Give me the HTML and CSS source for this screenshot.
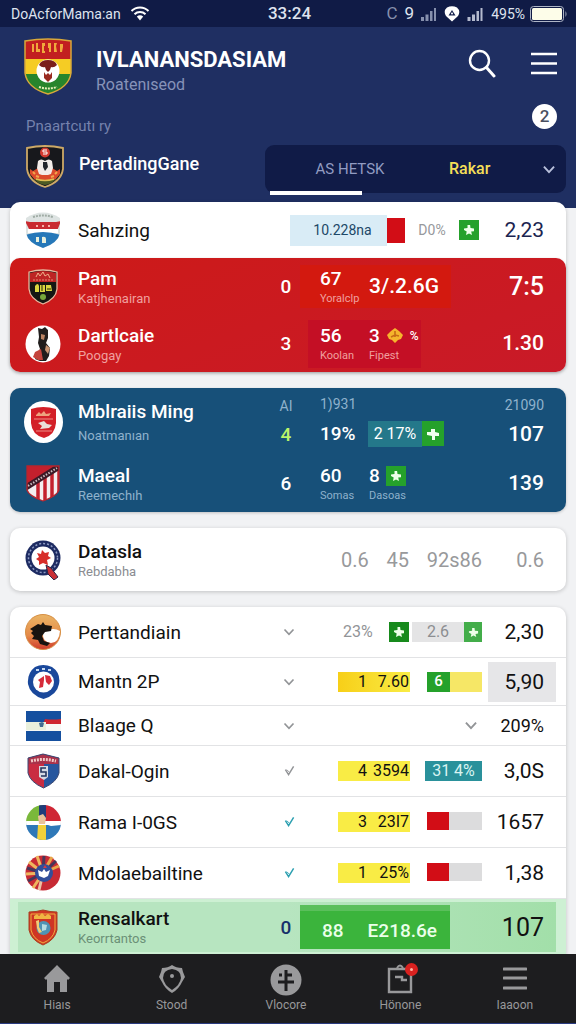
FILE: index.html
```html
<!DOCTYPE html>
<html lang="en">
<head>
<meta charset="utf-8">
<meta name="viewport" content="width=device-width, initial-scale=1">
<title>IVLANANSDASIAM</title>
<link rel="stylesheet" href="styles.css">
</head>
<body>
<svg class="defs" aria-hidden="true">
  <symbol id="chevron" viewBox="0 0 12 8"><path d="M1.5 1.5 6 6.3l4.500-4.800" fill="none" stroke="currentColor" stroke-width="1.700"/></symbol>
  <symbol id="tick" viewBox="0 0 12 12"><path d="M1.500 4.500 5 10l5.500-9" fill="none" stroke="currentColor" stroke-width="1.600"/><path d="M3 4.500 5.500 7" stroke="currentColor"/></symbol>
  <symbol id="bloom" viewBox="0 0 12 12"><path d="M4.500 1h2.600l.4 3 3.500.4v2.800L8.200 7.500 9 11 6 9.400 3 11l.7-3.500L1 6V4.600L4.500 4z" fill="#efffea"/></symbol>
  <symbol id="signal" viewBox="0 0 16 14"><path d="M0 10h3v4H0zM4.500 7.500h3V14h-3zM9 4h2.500v10H9zM13 1h2v13h-2z" fill="currentColor"/></symbol>
</svg>

<div class="status">
  <span class="carrier">DoAcforMama:an
    <svg width="20" height="15" viewBox="0 0 20 15" aria-hidden="true"><g fill="none" stroke="#fff" stroke-width="2"><path d="M1.500 5a12 12 0 0 1 17 0M4.500 8.200a8 8 0 0 1 11 0"/></g><path d="M6.800 10.500a5 5 0 0 1 6.400 0L10 14.500z" fill="#fff"/></svg>
  </span>
  <span class="clock">33:24</span>
  <span class="indicators">
    <span class="dim">C</span><span>9</span>
    <svg class="dim" width="16" height="14" aria-hidden="true"><use href="#signal"/></svg>
    <svg width="16" height="16" viewBox="0 0 16 16" aria-hidden="true"><path d="M3 1.500Q8-1 13 1.500 17 5 14 10L8 15.500 2 10Q-1 5 3 1.500z" fill="#fff"/><path d="M8 4 4.500 9.500h7z" fill="#18244f"/><circle cx="8" cy="7.500" r="1" fill="#fff"/></svg>
    <svg class="mid" width="17" height="14" aria-hidden="true"><use href="#signal"/></svg>
    <span class="percent">495%</span>
    <svg width="38" height="16" viewBox="0 0 38 16" aria-hidden="true"><rect x=".5" y=".5" width="33" height="15" rx="3" fill="none" stroke="#aeb5c6"/><rect x="2" y="2" width="30" height="12" rx="1.500" fill="#fdfde9"/><path d="M35.500 5v6q2-3 0-6z" fill="#aeb5c6"/></svg>
  </span>
</div>

<header class="header">
  <div class="brand">
    <svg class="brand-crest" width="50" height="58" viewBox="0 0 50 58" aria-hidden="true">
      <clipPath id="cb"><path d="M2 3Q25-1 48 3V35Q46 50 25 56 4 50 2 35z"/></clipPath>
      <g clip-path="url(#cb)"><path fill="#c21f20" d="M0 0h50v22H0z"/><path fill="#f5cc24" d="M0 21h50v15H0z"/><path fill="#27852c" d="M0 36h50v22H0z"/></g>
      <path d="M9 6h2v8H9zM13 5h2v6h2v3h-4zM19 5h3v3h-1v5h1v2h-3zM25 5h3v9h-2v-4h-1zM31 5h3l-1 3 1 6h-3zM37 6h3v3l-1 5h-2z" fill="#f0a93c"/>
      <circle cx="25" cy="33" r="11.500" fill="#fff"/>
      <path d="M16 27q2-5 9-5t9 5q-3 3-6 2l-1 3-2 2-2-2-1-3q-3 1-6-2z" fill="#7a1e1a"/><path d="M21 34l2 3 2-2 2 2 2-3v6l-4 4-4-4z" fill="#9a2a20"/>
      <path d="M16 49q9 3 18 0" stroke="#e8f0b8" stroke-width="2" stroke-dasharray="2 1" fill="none"/>
      <path d="M2 3Q25-1 48 3V35Q46 50 25 56 4 50 2 35z" fill="none" stroke="#d8a93a" stroke-width="1.500"/>
    </svg>
    <div class="brand-text">
      <h1 class="title">IVLANANSDASIAM</h1>
      <p class="tagline">Roatenıseod</p>
    </div>
    <button class="icon-button" aria-label="Search"><svg width="28" height="29" viewBox="0 0 28 29"><circle cx="11.500" cy="11.500" r="9.500" fill="none" stroke="#fff" stroke-width="2.400"/><path d="M18.500 18.500 26 27" stroke="#fff" stroke-width="3" stroke-linecap="round"/></svg></button>
    <button class="icon-button" aria-label="Menu"><svg width="26" height="23" viewBox="0 0 26 23"><path d="M0 2h26M0 11.500h26M0 21h26" stroke="#fff" stroke-width="2.600"/></svg></button>
  </div>
  <div class="caption-row">
    <p class="caption">Pnaartcutı ry</p>
    <span class="bubble">2</span>
  </div>
  <div class="picker">
    <svg width="40" height="43" viewBox="0 0 40 43" aria-hidden="true">
      <path d="M2 3Q20-1 38 3V24Q36 37 20 42 4 37 2 24z" fill="#17181c" stroke="#cda966" stroke-width="1.800"/>
      <path d="M8 26l5-3h14l5 3 3-2v5l-5 6H10l-5-6v-5z" fill="#db4b2c"/>
      <circle cx="20" cy="7.500" r="5" fill="#d33a30"/><path d="M22 5h-4v2h4v2h-4" stroke="#fff" fill="none"/>
      <path d="M13 16q3-3 7 0 4-3 7 0l1 7-2 6-3 1h-6l-3-1-2-6z" fill="#f3ece8"/><path d="M18 17h4l1 5-3 4-2-4z" fill="#23252b"/>
      <path d="M8 27l2 2m20 0 2-2M11 31l3 1m12 0 3-1" stroke="#f2a64c" stroke-width="2"/>
      <path d="M9 34q11 3 22 0-4 5-11 6-7-1-11-6z" fill="#4d5b24"/><path d="M11 34q9 3 18 0" stroke="#e0bf53" fill="none" stroke-width="1.500"/>
    </svg>
    <span class="picker-name">PertadingGane</span>
    <div class="tabs">
      <button class="tab">AS HETSK</button>
      <label class="tab-select"><select aria-label="Rakar"><option>Rakar</option></select><svg width="14" height="9"><use href="#chevron"/></svg></label>
    </div>
  </div>
</header>

<main class="content">
  <section class="card lead">
    <div class="row top">
      <svg class="crest" width="36" height="37" viewBox="0 0 36 37" aria-hidden="true">
        <clipPath id="cs"><path d="M1 6Q18-5 35 6V21Q33 31 18 36 3 31 1 21z"/></clipPath>
        <g clip-path="url(#cs)"><path fill="#dde3e2" d="M0 0h36v37H0z"/><path fill="#c92a30" d="M0 9l5 1h26l5-1-4 10H5z"/><path fill="#fff" d="M3 17h30v4H3z"/><path fill="#2678b9" d="M0 23q18-6 36 0v14H0z"/></g>
        <path d="M8 5q10-3 20 0" stroke="#a0aca5" stroke-width="2" stroke-dasharray="2 1" fill="none"/><path d="M11 14h2m4 0h2m4 0h2" stroke="#f7b0a8" stroke-width="2"/><path d="M11 25h3v5h-3zM17 25q4-1 4 2v4h-4z" fill="#e8f0dd"/>
      </svg>
      <span class="name">Sahızing</span>
      <div class="stats stats-top"><span class="chip pale">10.228na</span><i class="red-block"></i><span class="muted-small">D0%</span><span class="flag"><svg width="12" height="12"><use href="#bloom"/></svg></span></div>
      <span class="value navy">2,23</span>
    </div>
    <div class="panel red">
      <div class="row">
        <svg class="crest" width="30" height="36" viewBox="0 0 30 36" aria-hidden="true">
          <path d="M1 3Q15-1 29 3V20Q28 30 15 35 2 30 1 20z" fill="#151713" stroke="#e8b9a0" stroke-width="1.300"/><path d="M2 4Q15 0 28 4v9H2z" fill="#bd2424"/>
          <path d="M8 8l2-4 2 3 3-4 2 4 3-2 2 4" stroke="#efb08a" fill="none"/><path d="M5 11h20" stroke="#e58b72" stroke-dasharray="2 1"/>
          <path d="M7 17q3-4 4 0v6H7zM12 16h5v7h-5zM18 16h5l1 6h-6z" fill="#d9d63f"/><path d="M14 16v6m5-2h4" stroke="#22230d"/><circle cx="15" cy="28" r="3" fill="#78a83c"/>
        </svg>
        <div class="team"><span class="name strong">Pam</span><span class="sub">Katjhenairan</span></div>
        <span class="count">0</span>
        <div class="stats"><div class="hot"><div class="stat"><b>67</b><small>Yoralclp</small></div><b class="big">3/.2.6G</b></div></div>
        <span class="value heavy">7:5</span>
      </div>
      <div class="row">
        <svg class="crest" width="36" height="38" viewBox="0 0 36 38" aria-hidden="true">
          <ellipse cx="18" cy="19" rx="17.500" ry="18.500" fill="#fff"/><path d="M13 3l4 1 3-2 3 3v8l-2 5 4 5-1 8-3 5h-6l-5-2 2-5 3-5-2-6 1-6z" fill="#211d1c"/><path d="M16 9l4 1-1 5-3-1z" fill="#b98262"/><path d="M10 27l6-3 2 11h-5l-5-3z" fill="#c4443c"/><path d="M21 20l4 3-2 6-3-4z" fill="#c99573"/>
        </svg>
        <div class="team"><span class="name strong">Dartlcaie</span><span class="sub">Poogay</span></div>
        <span class="count">3</span>
        <div class="stats"><div class="cool"><div class="stat"><b>56</b><small>Koolan</small></div><div class="stat"><b class="with-mark">3 <svg width="18" height="16" viewBox="0 0 18 16" aria-hidden="true"><path d="M1 7 5 3l4-3 4 3 4 4-2 4-3 1-3 3-3-3-3-1z" fill="#f5b52c"/><path d="M9 3v6m-4 0 4-2 4 1" stroke="#c86b15" stroke-width="1.600" fill="none"/></svg> <i class="pct">%</i></b><small>Fipest</small></div></div></div>
        <span class="value">1.30</span>
      </div>
    </div>
  </section>

  <section class="panel blue">
    <div class="row tall">
      <svg class="crest" width="39" height="42" viewBox="0 0 39 42" aria-hidden="true">
        <ellipse cx="19.500" cy="21" rx="19.500" ry="21" fill="#fff"/><path d="M7 8Q19 4 32 8v14Q31 34 20 37 8 34 7 22z" fill="#d31f27"/><path d="M12 14l3-3 2 2 3-3 2 3 5-1-2 3H12z" fill="#eda27e"/><path d="M10 18h19M12 30h16" stroke="#ee8d86"/><path d="M14 22l6-2 3 3 5 1-3 3-9 1 2-3z" fill="#eadfd8"/>
      </svg>
      <div class="team"><span class="name strong">Mblraiis Ming</span><span class="sub">Noatmanıan</span></div>
      <div class="count stack"><small>AI</small><b class="lime">4</b></div>
      <div class="stats"><div class="stack"><small>1)931</small><div class="pair"><b class="nineteen">19%</b><span class="chip teal">2 17%</span><span class="flag joined"><svg width="14" height="14" viewBox="0 0 14 14"><path d="M5 2h4v3l4 1v3H9v4H6V9L1 8V5h4z" fill="#f0ffee"/></svg></span></div></div></div>
      <div class="value stack end"><small>21090</small><b>107</b></div>
    </div>
    <div class="row short">
      <svg class="crest" width="34" height="37" viewBox="0 0 34 37" aria-hidden="true">
        <clipPath id="cm"><path d="M1 1h32v24q-2 6-16 11Q3 31 1 25z"/></clipPath>
        <g clip-path="url(#cm)"><path fill="#f3eef0" d="M0 0h34v37H0z"/><path d="M12 12v25M19 10v27M26 5v32M33 0v37" stroke="#c4202d" stroke-width="3.500"/><path fill="#c4202d" d="M0 0h33L0 22z"/><path d="M-1 23 34 1" stroke="#3c1a27" stroke-width="6"/><path d="M2 21 31 3" stroke="#c9bfc2" stroke-width="2" stroke-dasharray="1.500 1.500"/></g><path d="M1 1h32v24q-2 6-16 11Q3 31 1 25z" fill="none" stroke="#b8252d" stroke-width="1.300"/>
      </svg>
      <div class="team"><span class="name strong">Maeal</span><span class="sub">Reemechıh</span></div>
      <span class="count">6</span>
      <div class="stats"><div class="plain"><div class="stat"><b>60</b><small>Somas</small></div><div class="stat"><b class="with-mark">8 <span class="flag"><svg width="12" height="12"><use href="#bloom"/></svg></span></b><small>Dasoas</small></div></div></div>
      <span class="value">139</span>
    </div>
  </section>

  <section class="card">
    <div class="row single">
      <svg class="crest" width="36" height="40" viewBox="0 0 36 40" aria-hidden="true">
        <circle cx="18" cy="18" r="17.500" fill="#1d2b62"/><circle cx="18" cy="18" r="14.500" fill="none" stroke="#8f9cc4" stroke-width="1.500" stroke-dasharray="2 2"/><circle cx="18" cy="18" r="11.500" fill="#fff"/>
        <path d="M12 13l4 1 1-4 3 3 4-1-1 4 3 2-4 2 1 5-5-2-4 2v-4l-3-2 3-2z" fill="#d72d29"/><path d="M21 25l5 3 7 9-4 3-6-6z" fill="#c92e35" stroke="#2b2547"/>
      </svg>
      <div class="team"><span class="name strong">Datasla</span><span class="sub">Rebdabha</span></div>
      <div class="greys"><span>0.6</span><span>45</span><span>92s86</span></div>
      <span class="value faded">0.6</span>
    </div>
  </section>

  <section class="card list">
    <div class="row item">
      <svg class="crest" width="36" height="38" viewBox="0 0 36 38" aria-hidden="true"><defs><linearGradient id="gp" x2="0" y2="1"><stop offset="0" stop-color="#eab566"/><stop offset=".6" stop-color="#e58a48"/><stop offset="1" stop-color="#cf3a2c"/></linearGradient></defs><circle cx="18" cy="19" r="17.500" fill="url(#gp)" stroke="#d78f44"/><path d="M18 20q9-7 17-2-1 12-9 12-9-1-8-10z" fill="#fff"/><path d="M5 16l8-5 3 1 2-3 2 3 7 1-1 5-6 1-3 4 2 5 6 2-3 3-7-2-2-4-6-1 2-3-3-3 2-2z" fill="#171310"/></svg>
      <span class="name">Perttandiain</span>
      <button class="toggle" aria-label="Expand"><svg width="12" height="8"><use href="#chevron"/></svg></button>
      <div class="stats line"><span class="muted">23%</span><span class="flag dark"><svg width="12" height="12"><use href="#bloom"/></svg></span><span class="chip grey">2.6</span><span class="flag light"><svg width="11" height="11"><use href="#bloom"/></svg></span></div>
      <span class="value">2,30</span>
    </div>
    <div class="row item compact">
      <svg class="crest" width="33" height="36" viewBox="0 0 33 36" aria-hidden="true"><path d="M8 3Q16-1 25 3 34 9 32 20 30 31 16.500 35 3 31 1 20 0 9 8 3z" fill="#1a489b"/><circle cx="16.500" cy="18" r="10.500" fill="#fff"/><path d="M9 6h3m3-1h3m3 1h3" stroke="#c6d8f0" stroke-width="2"/><path d="M11 16l6-4v4l-1 7-4 1 1-6zM18 11l5 1 2 5-3 4-3-3z" fill="#d62c3a"/></svg>
      <span class="name">Mantn 2P</span>
      <button class="toggle" aria-label="Expand"><svg width="12" height="8"><use href="#chevron"/></svg></button>
      <div class="stats meters"><span class="tag amber"><span>1</span><span>7.60</span></span><span class="meter sun"><span class="flag">6</span></span></div>
      <span class="value boxed">5,90</span>
    </div>
    <div class="row item slim">
      <svg class="crest" width="35" height="30" viewBox="0 0 35 30" aria-hidden="true"><path fill="#15509f" d="M0 0h35v30H0z"/><path fill="#f7f8f4" d="M0 11h35v9H0z"/><path fill="#cf2630" d="M19 8q7 1 16 0v5H17z"/><path d="M0 11h20v8H0z" fill="#e9f0dc"/><path d="M13 12l3-1 2 1-1 4h-3z" fill="#416c91"/></svg>
      <span class="name">Blaage Q</span>
      <button class="toggle" aria-label="Expand"><svg width="12" height="8"><use href="#chevron"/></svg></button>
      <div class="stats solo"><button class="toggle" aria-label="Expand details"><svg width="14" height="9"><use href="#chevron"/></svg></button></div>
      <span class="value smaller">209%</span>
    </div>
    <div class="row item">
      <svg class="crest" width="33" height="36" viewBox="0 0 33 36" aria-hidden="true"><clipPath id="cd"><path d="M1 5 16 1l16 4v15Q30 29 16.500 35 3 29 1 20z"/></clipPath><g clip-path="url(#cd)"><path fill="#c92c42" d="M0 0h17v36H0z"/><path fill="#27569e" d="M17 0h17v36H17z"/><path fill="#a9324a" d="M0 0h33v11H0z"/><path d="M4 8q12-3 25 0" stroke="#f1c9c6" stroke-width="3" stroke-dasharray="2 1" fill="none"/></g><path d="M12 13h9v11l-4 3-5-3z" fill="#d6dbe4"/><path d="M19 15h-5v4h5v4h-5" stroke="#25365e" fill="none" stroke-width="1.600"/><path d="M1 5 16 1l16 4v15Q30 29 16.500 35 3 29 1 20z" fill="none" stroke="#3b4974"/></svg>
      <span class="name">Dakal-Ogin</span>
      <button class="toggle" aria-label="Expand"><svg width="11" height="12"><use href="#tick"/></svg></button>
      <div class="stats meters"><span class="tag"><span>4</span><span>3594</span></span><span class="chip sea">31 4%</span></div>
      <span class="value">3,0S</span>
    </div>
    <div class="row item">
      <svg class="crest" width="35" height="37" viewBox="0 0 35 37" aria-hidden="true"><clipPath id="cr"><circle cx="17.500" cy="18.500" r="17.500"/></clipPath><g clip-path="url(#cr)"><path fill="#7ab83b" d="M0 0h17v19H0z"/><path fill="#cf2635" d="M17 0h18v19H17z"/><path fill="#2e78b8" d="M0 19h35v18H0z"/><path fill="#203c7a" d="M13 0h7v14h-7z"/><path fill="#fff" d="M0 17h35v4l-10 1-3-1H0z"/><path fill="#f2d13b" d="M12 21h8v16h-9z"/><path fill="#e9c39b" d="M12 12l5-2 3 4-1 6h-6z"/></g></svg>
      <span class="name">Rama I-0GS</span>
      <button class="toggle cyan" aria-label="Expand"><svg width="11" height="12"><use href="#tick"/></svg></button>
      <div class="stats meters"><span class="tag"><span>3</span><span>23I7</span></span><span class="meter"><i class="fill"></i></span></div>
      <span class="value">1657</span>
    </div>
    <div class="row item">
      <svg class="crest" width="36" height="38" viewBox="0 0 36 38" aria-hidden="true"><circle cx="18" cy="19" r="17.500" fill="#c72a34"/><g stroke-width="3"><path d="M18 19 4 8M18 19 12 2M18 19 1 20M18 19 8 34" stroke="#eeb65e"/><path d="M18 19 27 3M18 19 34 12" stroke="#e9a64a"/><path d="M18 19 19 2M18 19 2 14M18 19 3 27M18 19 31 7" stroke="#493659"/><path d="M18 19 14 36" stroke="#edc0a3"/></g><circle cx="19" cy="19" r="9" fill="#314e9a"/><path d="M13 16l4 2 2-3 2 3 4-2-2 6-4 2-5-2z" fill="#fff"/><path d="M18 14l2-3 2 3z" fill="#d33b44"/></svg>
      <span class="name">Mdolaebailtine</span>
      <button class="toggle cyan" aria-label="Expand"><svg width="11" height="12"><use href="#tick"/></svg></button>
      <div class="stats meters"><span class="tag"><span>1</span><span>25%</span></span><span class="meter"><i class="fill"></i></span></div>
      <span class="value">1,38</span>
    </div>
    <div class="winner">
      <div class="row won">
        <svg class="crest" width="30" height="37" viewBox="0 0 30 37" aria-hidden="true"><path d="M1 3q7 0 14-2 7 2 14 2v18Q27 31 15 36 3 31 1 21z" fill="#cf3524" stroke="#a9401f"/><path d="M3 5h24v16q-2 9-12 13Q5 30 3 21z" fill="none" stroke="#efae3f"/><path d="M6 7l3-2 2 2 3-3 3 3 3-2 3 2v3H6z" fill="#f0b642"/><circle cx="15.500" cy="19" r="7" fill="#4f93b5"/><path d="M8 12l3-1v7l3 5-3 1-2-5z" fill="#f0cf76"/><path d="M14 15l5 1-1 5-4 1z" fill="#b6dce2"/></svg>
        <div class="team"><span class="name strong">Rensalkart</span><span class="sub">Keorrtantos</span></div>
        <span class="count">0</span>
        <div class="stats"><div class="win-box"><b>88</b><b>E218.6e</b></div></div>
        <span class="value xl">107</span>
      </div>
    </div>
  </section>
</main>

<nav class="bottom">
  <a href="#home"><svg width="28" height="30" viewBox="0 0 28 30" aria-hidden="true"><path d="M14 1 27 14l-2 2-1-1v13h-7V18h-6v10H4V15l-1 1-2-2z" fill="#99999b"/></svg>Hiaıs</a>
  <a href="#stood"><svg width="28" height="30" viewBox="0 0 28 30" aria-hidden="true"><path d="M14 1q4 3 10 3l1 4 2 5-3 5q-3 7-10 11Q7 25 4 18l-3-5 2-5 1-4q6 0 10-3z" fill="#99999b"/><path d="M14 5q9 1 9 9-1 7-9 12-8-5-9-12 0-8 9-9z" fill="#1d1d1f"/><circle cx="14" cy="12" r="2" fill="#99999b"/></svg>Stood</a>
  <a href="#more"><svg width="32" height="32" viewBox="0 0 32 32" aria-hidden="true"><circle cx="16" cy="16" r="15.500" fill="#99999b"/><path d="M16 6v21M9 11h3m4 0h6M8 18h16" stroke="#1d1d1f" stroke-width="3"/></svg>Vlocore</a>
  <a href="#news"><span class="badge-wrap"><svg width="28" height="30" viewBox="0 0 28 30" aria-hidden="true"><path d="M3 5h22v23H3z" fill="none" stroke="#99999b" stroke-width="2.400"/><path d="M9 13h7v3h5" fill="none" stroke="#99999b" stroke-width="2.400"/><path d="M11 4q3-5 6 0" fill="none" stroke="#99999b" stroke-width="2"/></svg><span class="badge"></span></span>Hönone</a>
  <a href="#season"><svg width="24" height="30" viewBox="0 0 24 30" aria-hidden="true"><path d="M1 5h22M1 14h22M1 24h22" stroke="#99999b" stroke-width="3" stroke-linecap="round"/></svg>Iaaoon</a>
</nav>
</body>
</html>
```
FILE: styles.css
```css
* { box-sizing: border-box; }

body {
  margin: 0;
  min-height: 100vh;
  display: flex;
  flex-direction: column;
  background: #f1f2f4;
  color: #111;
  font-family: Roboto, "Liberation Sans", sans-serif;
  font-size: 19px;
  line-height: 1;
}

h1, p { margin: 0; }
button, select { font: inherit; color: inherit; background: none; border: 0; padding: 0; }
svg { display: block; flex: none; }
small { font-size: 11px; font-weight: 400; }
b { font-weight: 500; }
.defs { position: absolute; width: 0; height: 0; }

/* Status bar */
.status {
  height: 27px;
  display: grid;
  grid-template-columns: 1fr auto 1fr;
  align-items: center;
  padding: 0 8px 0 11px;
  background: #101b46;
  color: #dfe3ee;
  font-size: 17px;
}
.carrier, .indicators { display: flex; align-items: center; }
.carrier { gap: 9px; font-size: 14px; }
.clock { font-weight: 500; }
.indicators { justify-content: flex-end; gap: 7px; }
.percent { font-size: 14px; margin-right: -2px; }
.dim { color: #8690ad; }
.mid { color: #b4bace; }

/* Header */
.header {
  padding: 11px 10px 15px 23px;
  background: #1f2f62;
  color: #fff;
}
.brand { display: flex; align-items: flex-start; }
.brand-text { flex: 1; padding: 10px 0 0 23px; }
.title { font-size: 22px; line-height: 24px; font-weight: 700; }
.tagline { margin-top: 5px; font-size: 16px; color: #8793b9; }
.icon-button { width: 40px; height: 50px; display: grid; place-items: center; }
.icon-button + .icon-button { margin-left: 22px; margin-right: 2px; }
.caption-row {
  display: flex;
  justify-content: space-between;
  align-items: flex-start;
  margin: 8px 9px 0 3px;
}
.caption { padding-top: 15px; font-size: 15px; color: #7582ad; }
.bubble {
  width: 25px;
  height: 25px;
  border-radius: 50%;
  background: #fff;
  color: #4a4f60;
  font-size: 17px;
  font-weight: 500;
  display: grid;
  place-items: center;
}
.picker { display: flex; align-items: flex-start; padding-left: 2px; margin-top: 11px; }
.picker-name { flex: 1; padding: 10px 0 0 14px; font-size: 18px; font-weight: 500; }
.tabs {
  width: 301px;
  height: 48px;
  display: flex;
  justify-content: space-between;
  border-radius: 9px;
  background: #101b47;
}
.tab { position: relative; width: 170px; font-size: 15px; color: #929cc2; }
.tab::after {
  content: "";
  position: absolute;
  left: 5px;
  bottom: -2px;
  width: 92px;
  height: 4px;
  background: #fff;
}
.tab-select { flex: 1; display: flex; align-items: center; justify-content: space-between; padding: 0 10px 0 14px; color: #b9c1dc; }
.tab-select select { appearance: none; flex: 1; color: #f4df58; font-size: 16px; font-weight: 500; }

/* Cards */
.content { flex: 1; display: flex; flex-direction: column; gap: 16px; padding: 0 10px; margin-top: -6px; }
.card { background: #fff; border-radius: 10px; box-shadow: 0 1px 4px #0003; }
.panel { border-radius: 10px; color: #fff; box-shadow: 0 1px 3px #0003; }
.red { background: linear-gradient(160deg, #cd1a18, #c91a28); }
.blue { background: #175079; }

.row {
  display: grid;
  grid-template-columns: 38px minmax(0, 1fr) 28px 182px 62px;
  align-items: center;
  min-height: 57px;
  padding: 0 22px 0 14px;
}
.crest { justify-self: center; }
.name { padding-left: 16px; white-space: nowrap; }
.team { display: flex; flex-direction: column; gap: 4px; }
.strong { font-weight: 500; }
.sub { padding-left: 16px; font-size: 13px; color: #8a8c91; }
.red .sub, .red small { color: #f0a09f; }
.blue .sub, .blue small { color: #8fb2cc; }
.count { text-align: center; font-weight: 500; }
.stats { min-width: 0; }
.value { text-align: right; font-size: 21px; white-space: nowrap; }
.panel .value { font-weight: 500; }
.navy { color: #1b2450; }
.panel .heavy { font-size: 25px; }

/* Small blocks shared by the rows */
.flag {
  width: 20px;
  height: 20px;
  display: grid;
  place-items: center;
  background: #25a12b;
  color: #fff;
  font-size: 15px;
  font-weight: 500;
}
.chip { display: grid; place-items: center; }
.stat { display: flex; flex-direction: column; gap: 5px; }
.with-mark { display: flex; align-items: center; gap: 6px; height: 19px; }
.pct { font-size: 12px; font-style: normal; }

.top { min-height: 56px; grid-template-columns: 38px minmax(0, 1fr) 192px 62px; }
.stats-top { display: flex; align-items: center; }
.pale { width: 97px; height: 31px; padding-left: 8px; background: #d9ecf6; color: #1d4867; font-size: 14px; }
.red-block { width: 18px; height: 25px; background: #d20d16; }
.muted-small { flex: 1; text-align: center; font-size: 14px; color: #96989c; }
.stats-top .flag { margin-right: 3px; }

.hot, .cool, .plain { display: grid; grid-template-columns: 49px 1fr; align-items: center; }
.hot { width: 151px; height: 43px; padding-left: 20px; background: #d3190f; }
.big { font-size: 21px; white-space: nowrap; }
.cool { width: 113px; height: 48px; margin-left: 8px; padding-left: 12px; background: #c40f25; }
.plain { padding-left: 20px; }

.tall { min-height: 67px; }
.tall .team { gap: 8px; }
.stack { display: flex; flex-direction: column; align-items: center; gap: 12px; }
.stack small { font-size: 14px; }
.stats .stack { align-items: stretch; gap: 10px; padding-left: 20px; }
.end { align-items: flex-end; }
.pair { display: flex; align-items: center; }
.nineteen { width: 48px; }
.lime { color: #b9f36a; }
.teal { width: 54px; height: 26px; background: #24788a; font-size: 16px; }
.joined { width: 22px; height: 25px; }

.single { min-height: 63px; grid-template-columns: 38px minmax(0, 1fr) 143px 62px; }
.greys { display: flex; justify-content: space-between; color: #98999b; padding-left: 2px; font-size: 20px; }
.faded { color: #98999b; font-size: 20px; }

/* Fixtures list */
.list { border-radius: 10px 10px 0 0; }
.item { min-height: 51px; border-bottom: 1px solid #e2e3e5; }
.compact { min-height: 48px; }
.slim { min-height: 40px; }
.toggle { display: grid; place-items: center; color: #929497; height: 24px; padding-left: 6px; }
.cyan { color: #2b9fb0; }
.line { display: flex; align-items: center; }
.muted { width: 89px; padding-left: 43px; font-size: 16px; color: #929497; }
.dark { background: #178a1c; }
.light { width: 18px; background: #43ad4a; }
.grey { flex: 1; margin-left: 3px; height: 20px; background: #e4e4e5; color: #8c8e91; font-size: 16px; }
.meters { display: flex; justify-content: space-between; padding-left: 38px; }
.tag {
  width: 72px;
  height: 20px;
  display: flex;
  align-items: center;
  justify-content: space-between;
  padding: 0 1px 0 20px;
  background: #f9ec45;
  font-size: 16px;
}
.amber { background: linear-gradient(90deg, #f7cf18, #f9ec45); }
.meter { width: 55px; height: 18px; display: flex; background: #dcdcdd; }
.sun { height: 20px; background: #f6e766; }
.sun .flag { width: 23px; }
.fill { width: 22px; background: #d20d16; }
.sea { width: 57px; height: 20px; background: #2a919b; color: #d9f4f2; font-size: 16px; }
.boxed { height: 40px; margin: 0 -12px 0 6px; padding: 10px 12px 0 0; background: #e6e6e8; }
.solo { display: flex; justify-content: flex-end; padding-right: 4px; }
.smaller { font-size: 18px; }

.winner { background: #cdf0d3; padding: 3px 10px 2px 8px; }
.won {
  min-height: 50px;
  padding: 0 12px 0 6px;
  background: linear-gradient(90deg, #b7e5c0 50%, #a2dfa9);
}
.won .count { color: #17306a; }
.won .sub { color: #6b9077; }
.win-box {
  width: 150px;
  height: 44px;
  display: flex;
  align-items: center;
  justify-content: space-between;
  padding: 0 13px 0 22px;
  border-top: 6px solid #5abf5b;
  background: #3bb43c;
  color: #eaffea;
}
.xl { font-size: 25px; }

/* Bottom navigation */
.bottom {
  display: grid;
  grid-template-columns: repeat(5, 1fr);
  justify-items: center;
  height: 70px;
  padding: 10px 4px 0 0;
  background: #1d1d1f;
  border-bottom: 1px solid #2a3b80;
}
.bottom a {
  display: flex;
  flex-direction: column;
  justify-content: space-between;
  align-items: center;
  height: 47px;
  color: #98989a;
  font-size: 12px;
  text-decoration: none;
}
.badge-wrap { position: relative; }
.badge {
  position: absolute;
  top: -1px;
  right: -4px;
  width: 13px;
  height: 13px;
  border: 5px solid #d9211f;
  border-radius: 50%;
  background: #ffb4a4;
}
```
